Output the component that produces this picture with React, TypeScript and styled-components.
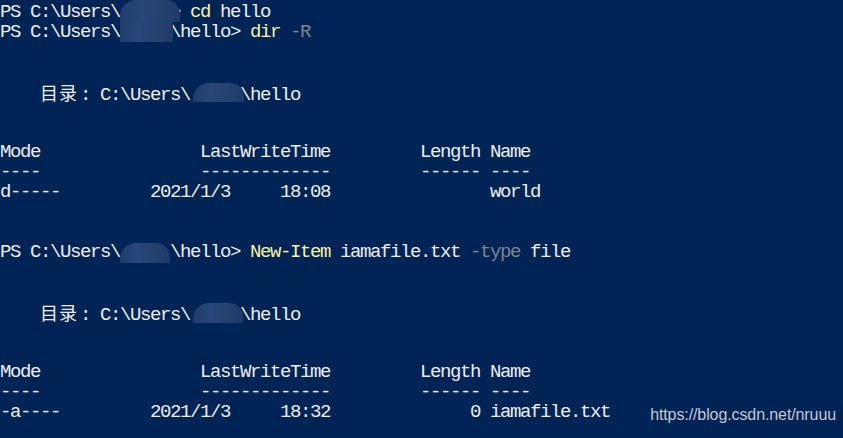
import React from "react";
import styled, { createGlobalStyle } from "styled-components";

const Global = createGlobalStyle`
  html, body { margin: 0; padding: 0; background: #012456; }
  body { width: 843px; height: 438px; overflow: hidden; }
`;

const Console = styled.div`
  position: relative;
  width: 844px;
  height: 438px;
  box-sizing: border-box;
  padding-top: 2px;
  background: #012456;
  border-left: 1px solid #3b5379;
  color: #eeedf0;
  font-family: "Liberation Mono", "Noto Sans CJK SC", monospace;
  font-size: 19px;
  letter-spacing: -1.4px;
  display: flex;
  flex-direction: column;
  margin-left: -1px;
`;

const Line = styled.div`
  height: 20px;
  line-height: 20px;
  white-space: pre;
`;

const Cmd = styled.span`
  color: #f9f1a5;
`;

const Param = styled.span`
  color: #7f8590;
`;

const Wide = styled.span<{ $cols: number }>`
  display: inline-block;
  width: ${(p) => p.$cols * 10}px;
  letter-spacing: 1px;
  font-size: 18px;
  font-family: "Noto Sans CJK SC", sans-serif;
`;

const User = styled.span`
  position: relative;
  display: inline-block;
  width: 50px;
  height: 20px;
  vertical-align: top;
`;

const Blur = styled.span<{ $l: number; $t: number; $w: number; $h: number; $flat?: boolean }>`
  position: absolute;
  left: ${(p) => p.$l}px;
  top: ${(p) => p.$t}px;
  width: ${(p) => p.$w}px;
  height: ${(p) => p.$h}px;
  background: linear-gradient(90deg, #1f3d6c 0%, #27467a 35%, #24426f 70%, #1d3a68 100%);
  border-radius: ${(p) => (p.$flat ? "0" : "16px 14px 0 0")};
  filter: blur(0.6px);
  z-index: 1;
`;

const Watermark = styled.div`
  position: absolute;
  right: 7px;
  top: 406px;
  font-family: "Liberation Sans", Arial, sans-serif;
  font-size: 16px;
  letter-spacing: -0.1px;
  color: #c3c8d2;
`;

const Blank = () => <Line> </Line>;

export default function App() {
  return (
    <>
      <Global />
      <Console>
        <Line>
          PS C:\Users\
          <User>
            <Blur $l={0} $t={-2} $w={60} $h={22} />
          </User>
          {"> "}
          <Cmd>cd</Cmd> hello
        </Line>
        <Line>
          PS C:\Users\
          <User>
            <Blur $l={0} $t={0} $w={53} $h={20} $flat />
          </User>
          {"\\hello> "}
          <Cmd>dir</Cmd> <Param>-R</Param>
        </Line>
        <Blank />
        <Blank />
        <Line>
          {"    "}
          <Wide $cols={4}>目录</Wide>
          {": C:\\Users\\"}
          <User>
            <Blur $l={3} $t={1} $w={51} $h={19} />
          </User>
          {"\\hello"}
        </Line>
        <Blank />
        <Blank />
        <Line>{"Mode                LastWriteTime         Length Name"}</Line>
        <Line>{"----                -------------         ------ ----"}</Line>
        <Line>{"d-----         2021/1/3     18:08                world"}</Line>
        <Blank />
        <Blank />
        <Line>
          PS C:\Users\
          <User>
            <Blur $l={0} $t={1} $w={50} $h={20} />
          </User>
          {"\\hello> "}
          <Cmd>New-Item</Cmd> iamafile.txt <Param>-type</Param> file
        </Line>
        <Blank />
        <Blank />
        <Line>
          {"    "}
          <Wide $cols={4}>目录</Wide>
          {": C:\\Users\\"}
          <User>
            <Blur $l={3} $t={1} $w={50} $h={20} />
          </User>
          {"\\hello"}
        </Line>
        <Blank />
        <Blank />
        <Line>{"Mode                LastWriteTime         Length Name"}</Line>
        <Line>{"----                -------------         ------ ----"}</Line>
        <Line>{"-a----         2021/1/3     18:32              0 iamafile.txt"}</Line>
        <Watermark>https://blog.csdn.net/nruuu</Watermark>
      </Console>
    </>
  );
}
